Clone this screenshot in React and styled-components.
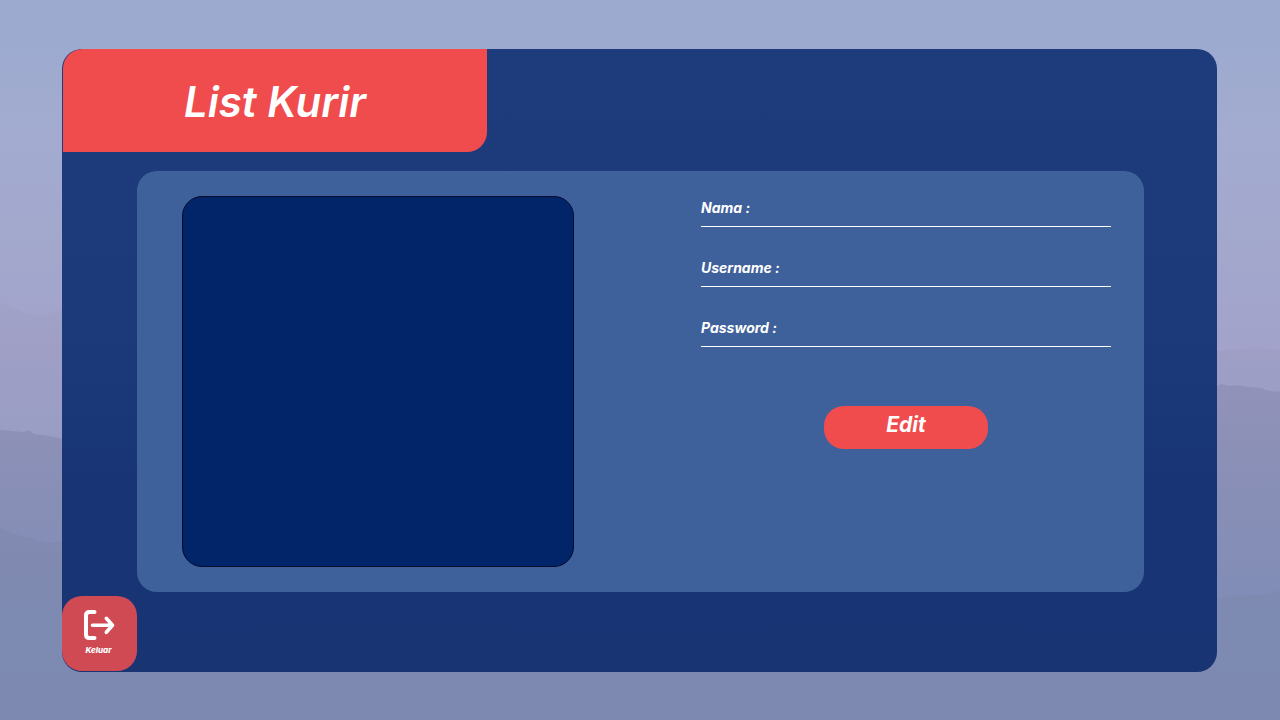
import React from "react";
import styled, { createGlobalStyle } from "styled-components";

const GlobalStyle = createGlobalStyle`
  *, *::before, *::after { box-sizing: border-box; }
  body {
    margin: 0;
    background: #9daacf;
    color: #fff;
    font-family: Inter, "Open Sans", "Liberation Sans", sans-serif;
    font-style: italic;
    font-weight: 700;
  }
  button, input { font: inherit; color: inherit; }
`;

const Backdrop = styled.svg`
  position: fixed;
  inset: 0;
  width: 100%;
  height: 100%;
  z-index: -1;
`;

const Page = styled.div`
  display: flex;
  min-height: 100vh;
  padding: 49px 63px 48px 62px;
`;

const Panel = styled.main`
  flex: 1;
  display: flex;
  flex-direction: column;
  align-items: flex-start;
  border-radius: 20px;
  background: linear-gradient(#1e3c7b, #1c3a79 45%, #183475 70%, #183473);
`;

const TitleBar = styled.header`
  display: flex;
  align-items: center;
  justify-content: center;
  width: 424px;
  max-width: 100%;
  height: 103px;
  margin-left: 1px;
  padding-top: 2px;
  border-radius: 20px 0 20px 0;
  background: #f04c4d;
`;

const Title = styled.h1`
  margin: 0;
  font-size: 42px;
  line-height: 48px;
  font-weight: 600;
`;

const Card = styled.section`
  align-self: stretch;
  flex: 1;
  display: grid;
  grid-template-columns: 392fr 410fr;
  gap: 127px;
  margin: 19px 73px 4px 75px;
  padding: 25px 33px 25px 45px;
  border-radius: 20px;
  background: #3f619b;
`;

const CourierList = styled.div`
  border: 1px solid #020b2c;
  border-radius: 20px;
  background: #022469;
`;

const Form = styled.form`
  display: flex;
  flex-direction: column;
  gap: 29px;
`;

const Field = styled.div`
  display: flex;
  gap: 8px;
  height: 31px;
  padding-bottom: 7px;
  border-bottom: 1px solid #fff;
  font-size: 14px;
  line-height: 23px;
`;

const FieldInput = styled.input`
  flex: 1;
  min-width: 0;
  padding: 0;
  border: 0;
  outline: 0;
  background: transparent;
`;

const EditButton = styled.button`
  align-self: center;
  width: 164px;
  height: 43px;
  margin-top: 30px;
  padding: 0 0 6px;
  border: 0;
  border-radius: 20px;
  background: #f04c4d;
  font-size: 21px;
  line-height: 24px;
  cursor: pointer;
`;

const ExitButton = styled.button`
  display: flex;
  flex-direction: column;
  align-items: center;
  gap: 3px;
  width: 75px;
  height: 75px;
  margin-bottom: 1px;
  padding: 13px 2px 0 0;
  border: 0;
  border-radius: 20px;
  background: #d04a54;
  font-size: 8px;
  line-height: 10px;
  font-weight: 800;
  cursor: pointer;
`;

const fields = [
  { id: "nama", label: "Nama :", type: "text" },
  { id: "username", label: "Username :", type: "text" },
  { id: "password", label: "Password :", type: "password" },
];

function Mountains() {
  return (
    <Backdrop viewBox="0 0 1280 720" preserveAspectRatio="none" aria-hidden="true">
      <defs>
        <linearGradient id="sky" gradientUnits="userSpaceOnUse" x1="0" y1="0" x2="0" y2="360">
          <stop offset="0" stopColor="#9daacf" />
          <stop offset="0.12" stopColor="#9daacf" />
          <stop offset="0.38" stopColor="#a3abd0" />
          <stop offset="0.72" stopColor="#a3a7cc" />
          <stop offset="1" stopColor="#a2a2cb" />
        </linearGradient>
        <linearGradient id="far" gradientUnits="userSpaceOnUse" x1="0" y1="300" x2="0" y2="440">
          <stop offset="0" stopColor="#a1a2c8" />
          <stop offset="0.35" stopColor="#9f9fc6" />
          <stop offset="1" stopColor="#999dc4" />
        </linearGradient>
        <linearGradient id="middle" gradientUnits="userSpaceOnUse" x1="0" y1="385" x2="0" y2="600">
          <stop offset="0" stopColor="#9192b9" />
          <stop offset="0.5" stopColor="#888fb6" />
          <stop offset="1" stopColor="#818db7" />
        </linearGradient>
        <linearGradient id="near" gradientUnits="userSpaceOnUse" x1="0" y1="525" x2="0" y2="720">
          <stop offset="0" stopColor="#828ab0" />
          <stop offset="0.5" stopColor="#7d8ab1" />
          <stop offset="1" stopColor="#7d89b0" />
        </linearGradient>
      </defs>
      <rect width="1280" height="720" fill="url(#sky)" />
      <path fill="url(#far)" d="M0 302C12 307 26 315 40 316C50 315 56 309 62 308L300 340L1217 351C1232 348 1262 348 1280 349V720H0Z" />
      <path fill="url(#middle)" d="M0 430L24 432Q29 428 34 434L50 436L62 439L600 440L1217 386L1222 384L1229 386L1235 385L1250 387L1261 388Q1272 393 1280 391V720H0Z" />
      <path fill="url(#near)" d="M0 527C12 536 30 536 46 543Q54 542 62 541L600 620L1217 598C1240 593 1262 598 1280 590V720H0Z" />
    </Backdrop>
  );
}

function ExitIcon() {
  return (
    <svg width="32" height="33" viewBox="0 0 32 33" fill="none" stroke="#fff" strokeWidth="4" strokeLinecap="round" strokeLinejoin="round" aria-hidden="true">
      <path d="M11.500 3H6.500Q3 3 3 6.500V25.500Q3 29 6.500 29H11.500" />
      <path strokeWidth="3.600" d="M9.500 16.300H29M23.300 9.300L29.500 16.300L23.300 23.300" />
    </svg>
  );
}

export default function App() {
  return (
    <>
      <GlobalStyle />
      <Mountains />
      <Page>
        <Panel>
          <TitleBar>
            <Title>List Kurir</Title>
          </TitleBar>
          <Card>
            <CourierList />
            <Form onSubmit={(event) => event.preventDefault()}>
              {fields.map(({ id, label, type }) => (
                <Field key={id}>
                  <label htmlFor={id}>{label}</label>
                  <FieldInput id={id} name={id} type={type} />
                </Field>
              ))}
              <EditButton type="submit">Edit</EditButton>
            </Form>
          </Card>
          <ExitButton type="button">
            <ExitIcon />
            Keluar
          </ExitButton>
        </Panel>
      </Page>
    </>
  );
}
